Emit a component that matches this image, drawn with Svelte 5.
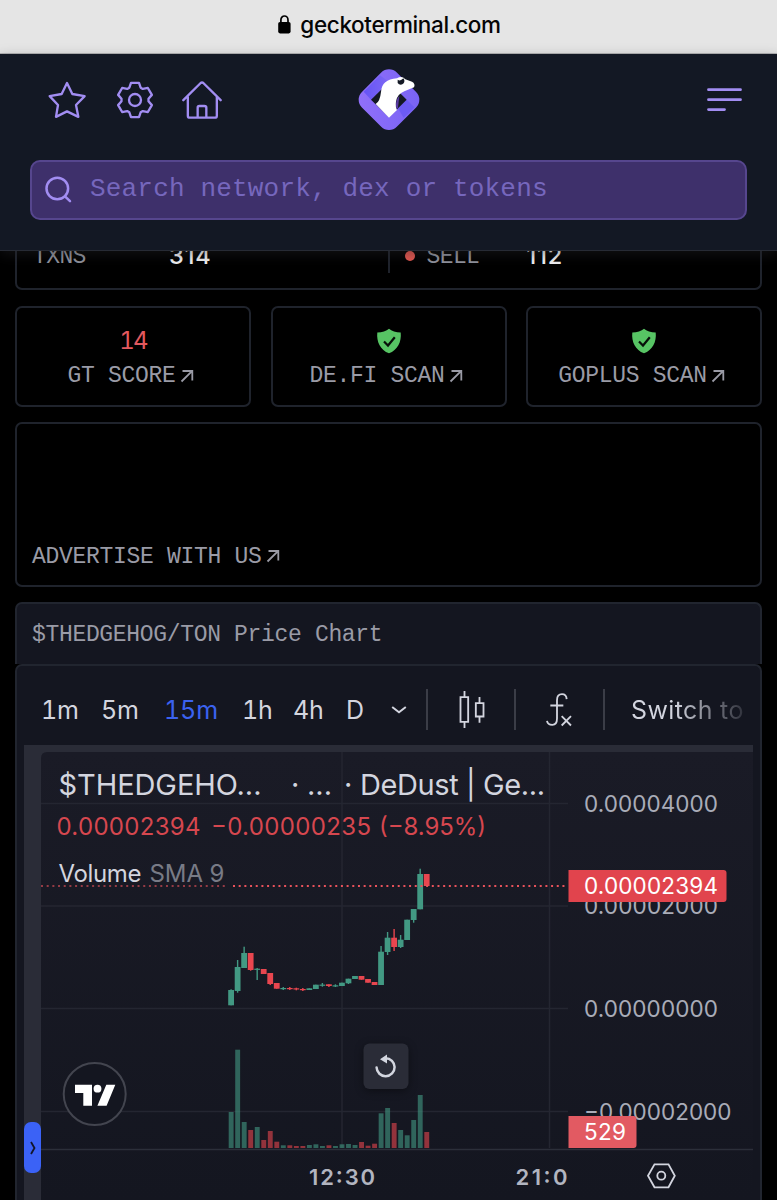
<script lang="ts">
    const scans = [
        { label: 'GT SCORE', score: '14' },
        { label: 'DE.FI SCAN' },
        { label: 'GOPLUS SCAN' },
    ];

    const intervals = ['1m', '5m', '15m', '1h', '4h', 'D'];
    let active = $state('15m');

    const UP = '#429983';
    const DOWN = '#e8464f';
    const STEP = 6.52;
    const FIRST_X = 231;
    const VOLUME_BASE = 1148;

    // [up, body top, body bottom, wick top, wick bottom, volume height]
    const candles: [number, number, number, number, number, number][] = [
        [1, 990, 1005.3, 989.3, 1005.3, 36],
        [1, 967, 991, 960, 992.7, 98.3],
        [1, 953, 968, 946.7, 968, 26],
        [0, 953, 970, 953, 970.7, 18],
        [1, 968.7, 969.7, 968, 980, 21],
        [0, 969, 974, 969, 974, 8],
        [0, 973, 984, 973, 985, 17],
        [0, 983, 988.7, 983, 988.7, 6.3],
        [1, 988, 989, 987, 990, 2.7],
        [0, 988, 989, 987, 990, 2.7],
        [0, 988.3, 989.3, 987.7, 990.3, 2],
        [0, 989, 990, 988, 991, 2],
        [1, 988.3, 990, 988.3, 990, 3],
        [1, 984.7, 989, 984.7, 989, 3.7],
        [1, 984.6, 985.6, 983, 986.7, 2],
        [0, 984.3, 986, 984.3, 987, 2.7],
        [1, 985.3, 986.3, 984.3, 987, 2],
        [1, 982.7, 986, 982.7, 986, 3.7],
        [1, 978.7, 983.3, 978.7, 984, 4],
        [1, 976, 979, 976, 979, 3],
        [0, 976, 979.7, 976, 979.7, 6],
        [0, 979, 982.7, 979, 982.7, 2.3],
        [0, 982, 985, 982, 985, 4.3],
        [1, 951.7, 985, 946, 985, 34.7],
        [1, 937.7, 952, 932, 955, 40],
        [0, 937.7, 947, 929, 951, 25],
        [1, 939.7, 947, 935, 948, 18],
        [1, 919.7, 940, 919.7, 940, 12.7],
        [1, 909, 920, 909, 922.7, 28],
        [1, 874, 909.3, 868.7, 909.3, 53],
        [0, 874, 886, 874, 886, 16],
    ];

    function gearPath(cx: number, cy: number) {
        const tooth = [[-17, -37], [-12, -51.5], [12, -51.5], [17, -37]];
        const points: string[] = [];
        for (let i = 0; i < 6; i++) {
            const a = (i * Math.PI) / 3;
            for (const [x, y] of tooth) {
                const px = cx + x * Math.cos(a) - y * Math.sin(a);
                const py = cy + x * Math.sin(a) + y * Math.cos(a);
                points.push(`${px.toFixed(1)} ${py.toFixed(1)}`);
            }
        }
        return `M${points.join('L')}Z`;
    }
</script>

{#snippet arrow()}
    <svg class="arrow" width="14" height="14" viewBox="0 0 14 14">
        <path d="M1.5 12.5 12 2.2M2.5 2h9.800v9.500" />
    </svg>
{/snippet}

<div class="page">
    <div class="browser-bar">
        <svg width="13" height="19" viewBox="0 0 13 19">
            <rect x="0.2" y="7" width="12.4" height="11.4" rx="1.8" />
            <path d="M2.9 8V4.9a3.55 3.9 0 0 1 7.1 0V8" fill="none" stroke="#000" stroke-width="1.7" />
        </svg>
        <span>geckoterminal.com</span>
    </div>

    <header>
        <nav>
            <div class="nav-icons">
                <svg width="40" height="40" viewBox="142 238 120 120">
                    <path d="M202 247 218 280 255 286.500 229 313 236 348.500 202 332 169 348.500 175 313 150 286.500 186 280Z" />
                </svg>
                <svg width="40" height="40" viewBox="345.500 238 120 120">
                    <path d={gearPath(405.5, 298)} />
                    <circle cx="405.500" cy="298" r="18" />
                </svg>
                <svg width="40" height="40" viewBox="548 238 120 120">
                    <path d="M552 298.500 604 247q4-3 8 0L664 298.500M565.500 289v56q0 6 6 6h75q6 0 6-6V289M595 350v-29q0-5 5-5h15q6 0 6 5v29" />
                </svg>
            </div>
            <svg class="logo" width="64" height="64" viewBox="50 203 192 192">
                <defs>
                    <linearGradient id="band" x1="0" y1="1" x2="1" y2="0">
                        <stop offset="0" stop-color="#9270fa" />
                        <stop offset="1" stop-color="#7763f4" />
                    </linearGradient>
                    <linearGradient id="fold" x1="0" y1="0" x2="1" y2="0">
                        <stop offset="0" stop-color="#6654f5" />
                        <stop offset="1" stop-color="#7d68f5" />
                    </linearGradient>
                </defs>
                <rect x="72" y="224" width="148" height="148" rx="33" transform="rotate(45 146 298)" fill="url(#band)" />
                <path d="M70 274 119 225l27 20-54 53z" fill="url(#fold)" />
                <path d="M199 298 222 321 190 352 173 324z" fill="#6c5bf4" />
                <path d="M92 298 146 245l53 53-53 53z" fill="#131824" />
                <path d="M168 326Q163 300 177 287L173 322z" fill="#5a3aa0" />
                <path d="M106 311Q119 304 122 275C124 250 139 236 170 234Q184 224 195 237L215 244Q226 250 221 261L192 273Q171 281 167 303Q165 322 170 329L146 352z" fill="#fff" />
                <path d="M172 238q8 6 17-4 6 8 1 15-6 7-14 3-6-4-4-14" fill="#131824" />
            </svg>
            <svg class="menu" width="36" height="26" viewBox="0 0 36 26">
                <path d="M2.500 2.700h32M2.500 12.700h32M2.500 22.600h16" />
            </svg>
        </nav>
        <div class="search">
            <svg width="28" height="28" viewBox="0 0 28 28">
                <circle cx="12.300" cy="12.500" r="10.800" />
                <path d="m20 20.300 5 4.900" />
            </svg>
            <span>Search network, dex or tokens</span>
        </div>
    </header>

    <main>
        <section class="card stats">
            <div class="stat">
                <span class="name">TXNS</span>
                <span class="value">314</span>
            </div>
            <div class="stat sell">
                <i></i>
                <span class="name">SELL</span>
                <span class="value">112</span>
            </div>
        </section>

        <section class="scans">
            {#each scans as scan}
                <div class="card scan">
                    {#if scan.score}
                        <strong>{scan.score}</strong>
                    {:else}
                        <svg width="26" height="26" viewBox="0 0 26 26">
                            <path d="M13 .8C10.500 3.200 6 4.400 1.300 4.400.3 14 4.500 22 13 25.200 21.500 22 25.700 14 24.700 4.400 20 4.400 15.500 3.200 13 .8Z" fill="#57c464" />
                            <path d="m8 13.500 4 4 6.800-8.300" fill="none" stroke="#071009" stroke-width="2.200" />
                        </svg>
                    {/if}
                    <span class="link">{scan.label}{@render arrow()}</span>
                </div>
            {/each}
        </section>

        <section class="card advert">
            <span class="link">ADVERTISE WITH US{@render arrow()}</span>
        </section>

        <h2>$THEDGEHOG/TON Price Chart</h2>

        <section class="chart">
            <div class="toolbar">
                {#each intervals as interval}
                    <button class:active={interval === active} onclick={() => (active = interval)}>{interval}</button>
                {/each}
                <svg width="16" height="10" viewBox="0 0 16 10"><path d="m1.200 2 6.800 5.200L14.800 2" /></svg>
                <hr />
                <svg class="type" width="28" height="41" viewBox="213 86 84 123">
                    <path d="M220.500 110.500h23v74h-23zM232.500 92v18M232.500 185v18M266.500 128.500h23v40h-23zM277.500 110v18M277.500 169v18" />
                </svg>
                <hr />
                <svg class="fx" width="30" height="37" viewBox="470 90 90 110">
                    <path d="M538 114Q537 99 524 99 509 99 509 117V172Q509 191 495 191 481 191 479 179M489 133h39M523 165l28 28M551 165l-28 28" />
                </svg>
                <hr />
                <span class="switch">Switch to</span>
            </div>

            <div class="frame">
                <div class="gutter">
                    <button aria-label="Show drawing toolbar">
                        <svg width="8" height="16" viewBox="0 0 8 16"><path d="m2 2 3.500 6L2 14" /></svg>
                    </button>
                </div>
                <svg class="plot" width="712" height="448" viewBox="41 752 712 448">
                    <defs>
                        <linearGradient id="plot-bg" x1="0" y1="0" x2="0" y2="1">
                            <stop offset="0" stop-color="#1a1b26" />
                            <stop offset="1" stop-color="#141620" />
                        </linearGradient>
                    </defs>
                    <path d="M41 1200V758q0-6 6-6h706v448z" fill="url(#plot-bg)" />

                    <path class="grid" d="M342 752v396M549.500 752v396M41 803.500h527M41 906h527M41 1008.500h527M41 1111.500h527" />
                    <path d="M41 1149.500h712" stroke="#2c2f3a" stroke-width="1.500" />

                    {#each candles as [up, top, bottom, high, low, volume], i}
                        {@const x = FIRST_X + i * STEP}
                        {@const color = up ? UP : DOWN}
                        <rect x={x - 2.3} y={VOLUME_BASE - volume} width="4.900" height={volume} fill={color} opacity="0.600" />
                        <rect x={x - 0.6} y={high} width="1.400" height={low - high} fill={color} />
                        <rect x={x - 2.8} y={top} width="5.800" height={Math.max(bottom - top, 1.2)} fill={color} />
                    {/each}

                    <path d="M41 886h187" class="last faded" />
                    <path d="M233 886h335" class="last" />

                    <g class="title">
                        <text x="58.500" y="795" textLength="203">$THEDGEHO...</text>
                        <text x="291" y="795">·</text>
                        <text x="307" y="795">...</text>
                        <text x="344" y="795">·</text>
                        <text x="360" y="795" textLength="185">DeDust | Ge...</text>
                    </g>
                    <g class="change">
                        <text x="56.500" y="835" textLength="144">0.00002394</text>
                        <text x="211" y="835" textLength="160">−0.00000235</text>
                        <text x="379" y="835" textLength="107">(−8.95%)</text>
                    </g>
                    <text x="58.500" y="881.500" textLength="83" class="study">Volume</text>
                    <text x="149.500" y="881.500" textLength="75" class="study dim">SMA 9</text>

                    <g class="axis">
                        <text x="584" y="811.500" textLength="134">0.00004000</text>
                        <text x="584" y="914" textLength="134">0.00002000</text>
                        <text x="584" y="1017" textLength="134">0.00000000</text>
                        <text x="584" y="1119.500" textLength="147.500">−0.00002000</text>
                    </g>
                    <path d="M568.500 870h155q3 0 3 3v26q0 3-3 3h-155z" fill="#e1444d" />
                    <text x="584" y="894" textLength="134" class="tag">0.00002394</text>
                    <path d="M568.500 1116h65q3 0 3 3v26q0 3-3 3h-65z" fill="#e25a62" />
                    <text x="584" y="1140" textLength="42" class="tag">529</text>

                    <g class="time">
                        <text x="309" y="1184.500" textLength="66">12:30</text>
                        <text x="515.500" y="1184.500" textLength="52">21:0</text>
                    </g>
                    <path class="hex" d="M654.500 1164.300h14l6.300 11.500-6.300 11.500h-14l-6.500-11.500z" />
                    <circle class="hex" cx="661.300" cy="1175.700" r="4" />

                    <circle cx="94.700" cy="1094" r="31" fill="#141620" stroke="#43454f" stroke-width="2" />
                    <g fill="#fff">
                        <path d="M75 1084.700h17v21h-8.700V1093H75zM106.300 1084.700h9l-8.700 21h-9.200z" />
                        <circle cx="97.500" cy="1088.700" r="3.900" />
                    </g>

                    <rect class="reset" x="363.500" y="1043.500" width="45" height="45.500" rx="6" />
                    <path d="M376.600 1067.500a9 9 0 1 0 9-9.300h-1" fill="none" stroke="#d3d6df" stroke-width="2.500" stroke-linecap="round" />
                    <path d="m380 1059.200 7-4.600v9z" fill="#d3d6df" />
                </svg>
            </div>
        </section>
    </main>
</div>

<style>
    :global(body) {
        margin: 0;
        background: #000;
    }

    .page {
        width: 777px;
        height: 1200px;
        overflow: hidden;
        background: #000;
        font-family: Inter, 'Liberation Sans', sans-serif;
    }

    .browser-bar {
        box-sizing: border-box;
        height: 54px;
        display: flex;
        align-items: center;
        justify-content: center;
        gap: 9px;
        padding: 0 0 5px 2px;
        background: #e5e5e5;
        border-bottom: 1px solid #b4b4b6;
        color: #050505;
        font-size: 22.5px;
        font-weight: 500;
        letter-spacing: -0.36px;
    }

    header {
        position: relative;
        box-sizing: border-box;
        height: 197px;
        padding: 13.500px 30px 0;
        background: #131824;
        border-bottom: 1px solid #272b35;
        box-shadow: 0 4px 12px rgba(40, 40, 46, 0.4);
    }

    header svg {
        flex: none;
        fill: none;
        stroke: #a28df2;
        stroke-width: 2.5;
        stroke-linejoin: round;
        stroke-linecap: round;
    }

    nav {
        display: grid;
        grid-template-columns: 1fr 64px 1fr;
        align-items: center;
    }

    .nav-icons {
        display: flex;
        gap: 27.500px;
        padding-left: 17px;
    }

    .nav-icons svg {
        stroke-width: 7;
    }

    header .logo {
        stroke: none;
    }

    header .menu {
        justify-self: end;
        margin-right: 5px;
        stroke-width: 2.8;
    }

    .search {
        box-sizing: border-box;
        height: 60px;
        margin-top: 28px;
        padding-left: 13px;
        display: flex;
        align-items: center;
        gap: 17px;
        border: 2px solid #56468e;
        border-radius: 10px;
        background: #3e306b;
        color: #7667bd;
        font: 26px 'Liberation Mono', monospace;
        letter-spacing: 0.18px;
    }

    .search span {
        padding-bottom: 1px;
    }

    main {
        padding: 0 15px;
    }

    .card {
        box-sizing: border-box;
        border: 2px solid #1f232c;
        border-radius: 7px;
    }

    .stats {
        height: 39px;
        display: flex;
        border-top: 0;
        border-radius: 0 0 7px 7px;
        overflow: hidden;
    }

    .stat {
        display: flex;
        align-items: center;
        width: 372px;
        height: 22px;
        margin-top: -7px;
    }

    .stat .name {
        width: 136px;
        padding: 3px 0 0 16px;
        color: #91939d;
        font: 23px 'Liberation Mono', monospace;
        letter-spacing: -0.6px;
    }

    .stat .value {
        color: #f2f2f4;
        font-size: 23.5px;
        font-weight: 500;
        letter-spacing: 0.9px;
    }

    .sell {
        height: 29px;
        margin-top: -7px;
        border-left: 2px solid #1f232c;
    }

    .sell > * {
        margin-top: -7px;
    }

    .sell i {
        width: 10px;
        height: 10px;
        margin: -6px 0 0 15px;
        border-radius: 50%;
        background: #e4574f;
    }

    .sell .name {
        width: 100px;
        padding-left: 12px;
    }

    .scans {
        display: grid;
        grid-template-columns: repeat(3, 236px);
        justify-content: space-between;
        margin-top: 16px;
    }

    .scan {
        height: 101px;
        display: flex;
        flex-direction: column;
        align-items: center;
        padding-top: 20px;
    }

    .scan strong {
        height: 34px;
        line-height: 25px;
        color: #e2595f;
        font-size: 24px;
        font-weight: 400;
        font-variant-numeric: tabular-nums;
        letter-spacing: -1.8px;
    }

    .scan > svg {
        height: 26px;
        margin-bottom: 8px;
    }

    .scan .link {
        margin-right: 5px;
    }

    .link {
        display: flex;
        align-items: center;
        color: #9a9ba6;
        font: 23px/28px 'Liberation Mono', monospace;
        letter-spacing: -0.3px;
        white-space: nowrap;
    }

    .arrow {
        margin: -1px 0 0 4px;
        fill: none;
        stroke: #9a9ba6;
        stroke-width: 1.8;
    }

    .advert {
        height: 165px;
        margin-top: 15px;
        padding: 118.500px 15px 0;
    }

    h2 {
        box-sizing: border-box;
        height: 62px;
        margin: 15px 0 0;
        padding-left: 15px;
        border: 2px solid #21252f;
        border-bottom: 0;
        border-radius: 7px 7px 0 0;
        background: #141620;
        color: #9a9ba6;
        font: 23px/63px 'Liberation Mono', monospace;
        letter-spacing: -0.33px;
    }

    .chart {
        border: 2px solid #21252f;
        border-bottom: 0;
        border-radius: 7px 7px 0 0;
        background: #141620;
        height: 536px;
    }

    .toolbar {
        height: 79px;
        display: grid;
        grid-template-columns: 60px 63px 78px 51px 53px 45px 35px 32px 56px 32px 57px 28px 114px;
        align-items: center;
        padding: 8px 0 0 24px;
        box-sizing: border-box;
        color: #d3d5df;
        font-size: 25px;
        font-variant-numeric: tabular-nums;
    }

    .toolbar button {
        all: unset;
        cursor: pointer;
        letter-spacing: -0.1px;
    }

    .toolbar button.active {
        color: #3b62f0;
    }

    .toolbar svg {
        fill: none;
        stroke: #d3d5df;
        stroke-width: 2;
    }

    .toolbar .type,
    .toolbar .fx {
        stroke-width: 5.5;
    }

    .toolbar .fx {
        margin-left: -2px;
    }

    .toolbar hr {
        width: 2px;
        height: 41px;
        margin: 0;
        border: 0;
        background: #3b3d47;
    }

    .switch {
        width: 113px;
        letter-spacing: 0.4px;
        white-space: nowrap;
        color: transparent;
        background: linear-gradient(90deg, #d3d5df 38%, #343640 98%);
        background-clip: text;
    }

    .frame {
        display: flex;
        width: 729px;
        margin-left: 7px;
        padding-top: 7px;
        background: #2a2c37;
    }

    .gutter {
        width: 17px;
        padding-top: 370px;
    }

    .gutter button {
        all: unset;
        width: 17px;
        height: 51px;
        display: flex;
        align-items: center;
        justify-content: center;
        border-radius: 7px;
        background: #3b62f6;
    }

    .gutter path {
        fill: none;
        stroke: #12162a;
        stroke-width: 1.8;
    }

    .plot {
        display: block;
    }

    .grid {
        stroke: #242631;
        stroke-width: 1.5;
    }

    .last {
        stroke: #e8525b;
        stroke-width: 1.8;
        stroke-dasharray: 2 3.68;
    }

    .faded {
        opacity: 0.6;
    }

    .title {
        fill: #d3d5df;
        font-size: 29px;
    }

    .change {
        fill: #d6474f;
        font-size: 24px;
    }

    .study {
        fill: #d3d5df;
        font-size: 24px;
    }

    .dim {
        fill: #787b86;
    }

    .axis {
        fill: #a9acb8;
        font-size: 22.5px;
    }

    .tag {
        fill: #fff;
        font-size: 22.5px;
    }

    .time {
        fill: #b2b5c0;
        font-size: 22px;
        font-weight: 600;
    }

    .hex {
        fill: none;
        stroke: #d3d5df;
        stroke-width: 1.8;
    }

    .reset {
        fill: #2a2c37;
        filter: drop-shadow(0 2px 4px rgba(0, 0, 0, 0.4));
    }
</style>
